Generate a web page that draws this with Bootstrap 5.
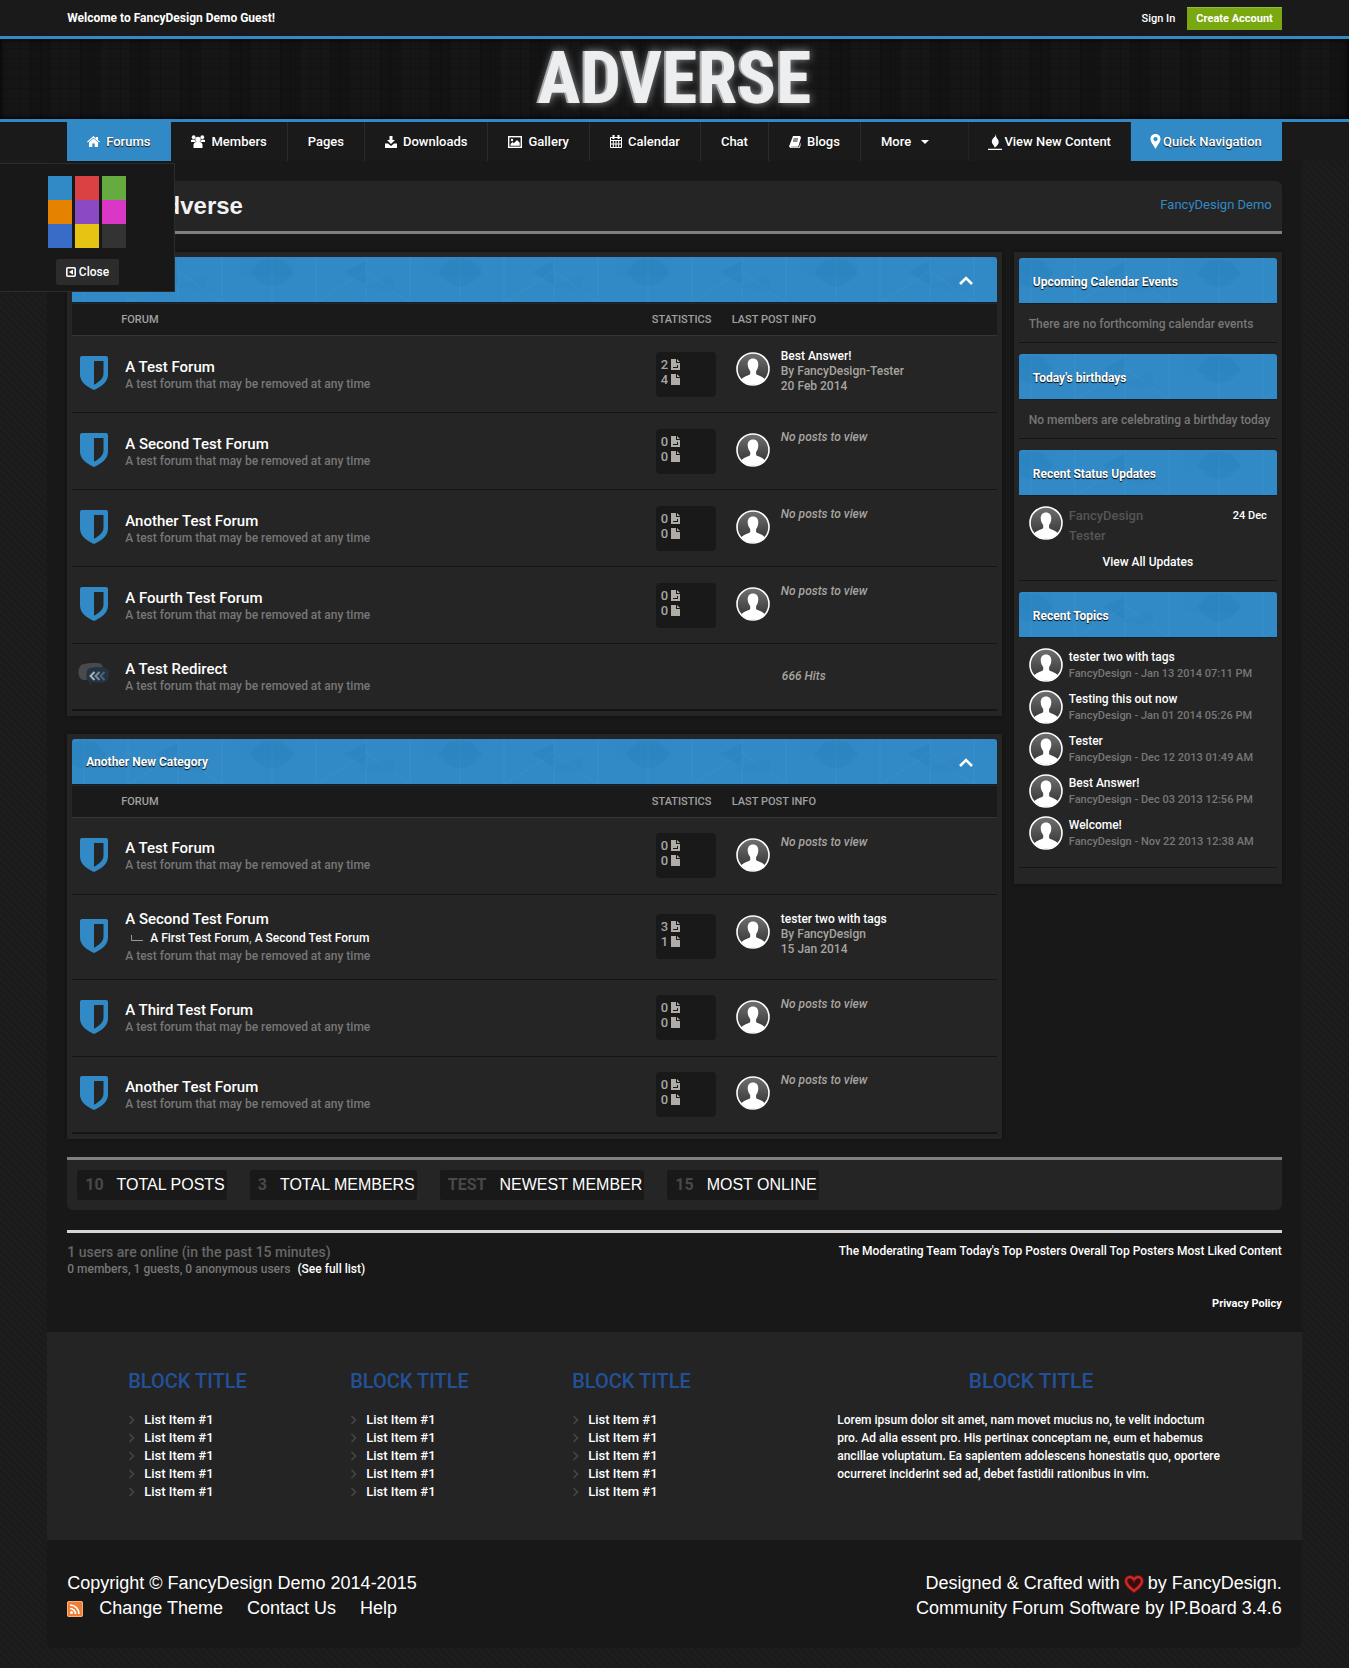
<!DOCTYPE html>
<html lang="en">
<head>
<meta charset="utf-8">
<meta name="viewport" content="width=device-width, initial-scale=1">
<title>FancyDesign Demo</title>
<link rel="stylesheet" href="https://cdn.jsdelivr.net/npm/bootstrap@5.3.0/dist/css/bootstrap.min.css">
<style>
body{background-color:#1b1b1b;background-image:repeating-linear-gradient(45deg,rgba(0,0,0,.05) 0 2px,rgba(255,255,255,.006) 2px 5px);color:#777;font:500 12px/17px Roboto,"Liberation Sans",sans-serif}
a{color:#fff;text-decoration:none}
a:hover{color:#318ac6}
svg{display:block;flex:none}
.shell{width:93%;margin:0 auto}
.gutter{padding-left:20px;padding-right:20px}
.arial{font-family:"Liberation Sans",Arial,sans-serif;font-weight:400}
.topbar{background:#1a1a1a;height:36px;color:#fff}
.welcome{font-size:12px;font-weight:700}
.signin{font-size:11px}
.create{background:#7aa810;border:0;border-top:1px solid #93bd33;border-radius:0;color:#fff;font:700 11px/20px Roboto,sans-serif;padding:1px 9px}
.banner{height:86px;border-top:3px solid #318ac6;border-bottom:3px solid #318ac6;background-color:#131313;background-image:repeating-linear-gradient(0deg,rgba(0,0,0,.14) 0 1px,transparent 1px 10px),repeating-linear-gradient(90deg,rgba(0,0,0,.14) 0 1px,transparent 1px 10px),repeating-linear-gradient(90deg,rgba(255,255,255,.01) 0 30px,transparent 30px 50px);box-shadow:inset 0 0 6px #000}
.brand{font:700 72px/80px "Liberation Sans Narrow","Roboto Condensed",Roboto,sans-serif;color:#eceeef;text-shadow:-2px 0 0 #a9adaf,0 0 9px rgba(255,255,255,.55)}
.menubar{background:#1a1a1a}
.menubar a{height:39px;padding:0 20px;border-right:1px solid #2b2b2b;color:#fff;font-size:13px;font-weight:500;gap:6px;text-shadow:0 1px 1px #111}
.menubar a.hot{background:#318ac6;border-color:#318ac6}
.menubar a.close-icon{gap:2px;padding:0 19px}
.menubar a.more{border-right:0}
.wrapper{background:#181818;border-radius:0 0 8px 8px;padding-top:20px}
.titlebar{background:#252525;border-bottom:3px solid #808080;border-radius:6px 6px 0 0;height:53px;padding:0 10px 0 81px}
.titlebar h1{font:700 24px/28px "Liberation Sans",Arial,sans-serif;color:#f2f2f2;margin:0}
.titlebar a{color:#318ac6;font-size:13px;font-weight:400;padding-bottom:4px}
.boards{gap:12px;margin-top:18px}
.side{width:268px;flex:none}
.panel{background:#252525;padding:5px;box-shadow:0 0 3px #111}
.panel+.panel{margin-top:18px}
.cap{height:46px;border-bottom:1px solid #10202c;border-radius:3px 3px 0 0;color:#fff;font:700 12px/17px Roboto,sans-serif;margin:0;padding:3px 23px 0 14px;text-shadow:0 1px 1px #000;background:#318ac6 url("data:image/svg+xml,%3Csvg xmlns='http://www.w3.org/2000/svg' width='188' height='46'%3E%3Cg fill='%23004c86' fill-opacity='.08'%3E%3Cpath d='M0 0h34v20H0zM166 0h22v20h-22z' opacity='.3'/%3E%3Cpath d='M12 1l12 3 10 11-10 11-12 4L0 26V4zM178 15l10-11v22zM106 4v24L84 15z'/%3E%3Cpath d='M100 30l34-12v16z' opacity='.4'/%3E%3C/g%3E%3Cpath d='M12 0v46M56 0v46M106 0v46M150 0v46M56 46l50-32 44 32' fill='none' stroke='%2370b8e8' stroke-opacity='.08'/%3E%3C/svg%3E")}
.cap button{background:none;border:0;padding:0}
.boardlist{width:100%;table-layout:fixed;border-collapse:collapse}
.boardlist th{height:32px;padding:0;background:#1a1a1a;border-top:1px solid #252525;border-bottom:1px solid #353535;color:#a0a0a0;font-size:11px;font-weight:500}
.boardlist td{height:77px;padding:0;vertical-align:middle;border-bottom:1px solid #141414;color:#777}
.boardlist tr.tall td{height:85px}
.boardlist tr.short td{height:66px}
.boardlist tr:last-child td{border-bottom:2px solid #141414}
.c-icon{width:49px}.c-stat{width:80px}.c-last{width:265px}
.boardlist .ico{padding:0 0 2px 8px}
.boardlist .short .ico{padding-left:6px}
.boardlist .name{padding:2px 0 0 4px}
.name h4{font-size:15px;line-height:17px;font-weight:500;margin:0}
.name p{margin:0;font-size:12px;line-height:16px}
.subs{height:20px;gap:7px;padding-left:6px;color:#aaa}
.tally{width:60px;height:45px;margin-left:4px;background:#191919;border-radius:4px;padding:5px 5px 0;color:#a8a4a0;font-size:13px;line-height:15px}
.tally div{gap:3px}
.last{gap:11px;padding:0 0 5px 4px;min-height:40px;color:#a8a4a0;font-size:12px;line-height:15px}
.last svg{margin-top:3px}
.hits{padding-left:50px;color:#a8a4a0}
.box-body{padding:12px 4px 9px 10px;border-bottom:1px solid #141414;margin-bottom:11px}
.box-body.people{padding:10px 10px 9px}
.side .panel{padding-top:6px}
.status{gap:6px;font-size:13px;line-height:20px;color:#555}
.status small{font-size:11px;color:#fff}
.topics{gap:8px}
.topics li{gap:6px;line-height:17px}
.topics li div{padding-top:1px}
.topics p{margin:0;font-size:11px;line-height:16px}
.totals{background:#252525;border-top:3px solid #808080;border-radius:0 0 6px 6px;height:53px;margin-top:18px;padding:10px;gap:23px}
.totals li{background:#191919;border-radius:3px;height:30px;padding:0 2px 1px 8px;gap:13px;color:#fff;font-size:16px;line-height:29px}
.totals b{color:#484848;font-family:Roboto,sans-serif}
.online{border-top:3px solid #d6d4d4;margin-top:20px;padding-top:10px;height:102px}
.online h3{font-size:14px;line-height:18px;font-weight:500;margin:0;color:#666}
.links{gap:3px;font-size:12px;line-height:16px;font-weight:500}
.blocks{background:#242424;height:208px;padding:35px 77px 0 81px}
.blocks h3{color:#235197;font-size:20px;line-height:28px;font-weight:500;margin:0 0 16px}
.blocks li{font-size:13px;line-height:18px;gap:9px}
.foot-col{width:222px;flex:none}
.lorem{padding-left:43px;color:#fff}
.lorem h3{font-size:21px}
.lorem p{font-size:12px;line-height:18px;margin:0}
.legal{color:#fff;font-size:18px;line-height:25px;padding-top:31px;height:108px}
.swatches{position:absolute;left:0;top:163px;width:175px;height:129px;background:#181818;border:1px solid #2c2c2c;border-left:0;z-index:5;padding-top:12px}
.palette{display:grid;grid-template-columns:repeat(3,24px);column-gap:3px;margin:0 0 11px 48px}
.palette button{height:24px;border:0;padding:0}
.shut{margin-left:56px;width:63px;height:26px;background:#2c2c2c;border:0;border-radius:2px;color:#fff;font-size:12px;font-weight:500;gap:3px}
</style>
<script src="https://cdn.jsdelivr.net/npm/bootstrap@5.3.0/dist/js/bootstrap.bundle.min.js"></script>
</head>
<body>
<svg width="0" height="0" class="position-absolute" aria-hidden="true">
<defs>
<linearGradient id="grey" x1="0" y1="0" x2="0" y2="1"><stop offset="0" stop-color="#707070"/><stop offset="1" stop-color="#303030"/></linearGradient>
<clipPath id="disc"><circle cx="17" cy="17" r="15.5"/></clipPath>
</defs>
<symbol id="avatar" viewBox="0 0 34 34"><circle cx="17" cy="17" r="16" fill="url(#grey)" stroke="#fff" stroke-width="1.6"/><path clip-path="url(#disc)" fill="#fff" d="M17 6.500c3.500 0 5.300 2.300 5.300 5.800 0 3-1 5.200-2.200 6.800v3c1.500 1.800 8.200 2.300 9.700 7.100L26 34H8l-3.500-5c1.500-4.800 8.200-5.300 9.700-7.100v-3C13 17.500 11.700 15.300 11.700 12.300c0-3.500 1.800-5.800 5.300-5.800z"/></symbol>
<symbol id="shield" viewBox="0 0 28 34"><path fill="#318ac6" fill-rule="evenodd" d="M2 0h24q2 0 2 2v16.500C28 26 21 31 14 34 7 31 0 26 0 18.500V2Q0 0 2 0zM14 5v23.700c5-2.700 9.500-6 9.500-11.200V5z"/></symbol>
<symbol id="redirect" viewBox="0 0 32 24"><path fill="#484a4c" d="M6 1q9-2 16-.5 3 1 3 6v5q0 5-4 5.500H8q-7 1-7.500-7Q0 2 6 1z"/><path fill="#243342" d="M12 5q9-2 16 0 3 1 3 6 0 7-4 8-7 2-14 0v4l-3-5q-2-1-1.500-7Q8.500 6 12 5z"/><path d="M16.500 9l-4 4 4 4" fill="none" stroke="#a8b2bc" stroke-width="2"/><path d="M21.500 9l-4 4 4 4" fill="none" stroke="#7d8b99" stroke-width="2"/><path d="M26.500 9l-4 4 4 4" fill="none" stroke="#4e6176" stroke-width="2"/></symbol>
<symbol id="reply" viewBox="0 0 10 11"><path fill="#b0aca8" fill-rule="evenodd" d="M0 0h5v4h4v7H0zM6 0l3 3H6zM2 8v1h5V6H6v2z"/></symbol>
<symbol id="file" viewBox="0 0 10 11"><path fill="#b0aca8" d="M0 0h5v4h4v7H0zM6 0l3 3H6z"/></symbol>
<symbol id="up" viewBox="0 0 16 10"><path d="M2 8l6-6 6 6" fill="none" stroke="#fff" stroke-width="2.600"/></symbol>
<symbol id="angle" viewBox="0 0 7 10"><path d="M1.500 1l4 4-4 4" fill="none" stroke="#464646" stroke-width="1.600"/></symbol>
</svg>

<header>
<div class="topbar"><div class="shell gutter h-100 d-flex justify-content-between align-items-center">
<span class="welcome">Welcome to FancyDesign Demo Guest!</span>
<div class="d-flex align-items-center gap-2"><a href="#" class="signin me-1">Sign In</a><button type="button" class="create">Create Account</button></div>
</div></div>
<div class="banner text-center"><a href="#" class="brand d-inline-block">ADVERSE</a></div>
<nav class="menubar"><div class="shell gutter d-flex">
<a href="#" class="hot d-flex align-items-center"><svg width="13" height="11" viewBox="0 0 13 11" fill="#fff"><path d="M6.500 0L9 2.200V1h2v3l2 1.700-.8.800L6.500 1.700.8 6.500 0 5.700z"/><path d="M2 6.300l4.500-3.800L11 6.300V11H7.700V7.500H5.300V11H2z"/></svg>Forums</a>
<a href="#" class="d-flex align-items-center"><svg width="14" height="13" viewBox="0 0 14 13" fill="#fff"><circle cx="7" cy="4.500" r="2.700"/><circle cx="2.700" cy="2.200" r="1.900"/><circle cx="11.300" cy="2.200" r="1.900"/><path d="M0 7V5q2-1 3.700-.3Q4 6 5 7zM14 7V5q-2-1-3.700-.3Q10 6 9 7zM2.500 13V9.500Q3 7 5 7h4q2 0 2.500 2.500V13z"/></svg>Members</a>
<a href="#" class="d-flex align-items-center">Pages</a>
<a href="#" class="d-flex align-items-center"><svg width="12" height="12" viewBox="0 0 12 12"><path fill="#fff" d="M4.500 0h3v4H10L6 8 2 4h2.500zM0 7.500h3L6 10l3-2.500h3V12H0z"/></svg>Downloads</a>
<a href="#" class="d-flex align-items-center"><svg width="14" height="12" viewBox="0 0 14 12"><rect x=".7" y=".7" width="12.600" height="10.600" fill="none" stroke="#fff" stroke-width="1.400"/><circle cx="4" cy="4" r="1.200" fill="#fff"/><path d="M2.500 9.800V8l2-2 1.300 1.300L9 4l2.700 2.800v3z" fill="#fff"/></svg>Gallery</a>
<a href="#" class="d-flex align-items-center"><svg width="12" height="13" viewBox="0 0 12 13"><path fill="none" stroke="#fff" d="M.5 2.500h11v10H.5zM.5 5.500h11M.5 9h11M3.300 5v7.500M6 5v7.500M8.700 5v7.500"/><path stroke="#fff" stroke-width="2" d="M3.500 0v4M8.500 0v4"/></svg>Calendar</a>
<a href="#" class="d-flex align-items-center">Chat</a>
<a href="#" class="d-flex align-items-center"><svg width="12" height="12" viewBox="0 0 12 12"><path fill="#fff" d="M4 0h7l1 1.500L9.500 10l-.5.700H2v.5h8l1.500-5V10L10.500 12H1.500L0 10.500z"/><path d="M4.500 3h4.500M4 5h4.500" stroke="#1a1a1a"/></svg>Blogs</a>
<a href="#" class="more d-flex align-items-center">More<svg width="8" height="4" viewBox="0 0 8 4" class="ms-1"><path fill="#fff" d="M0 0h8L4 4z"/></svg></a>
<span class="ms-auto d-flex"><a href="#" class="close-icon d-flex align-items-center border-start border-dark"><svg width="14" height="16" viewBox="0 0 14 16"><path fill="#fff" d="M8 0q-.5 2.500 1.500 5 2.500 3 0 6-1 1.500-3 2.500-.5-2-1.500-3-2.500-3 0-6Q8 2.500 8 0zM0 14.800h14V16H0z"/></svg>View New Content</a>
<a href="#" class="close-icon hot d-flex align-items-center"><svg width="11" height="15" viewBox="0 0 11 15"><path fill="#fff" fill-rule="evenodd" d="M5.500 0C9 0 10.500 2.500 10.500 5c0 3-3 6-5 10-2-4-5-7-5-10 0-2.500 1.500-5 5-5zm0 3a2 2 0 100 4.200 2 2 0 000-4.200z"/></svg>Quick Navigation</a></span>
</div></nav>
</header>

<aside class="swatches" aria-label="Theme colours">
<div class="palette">
<button style="background:#318ac6" aria-label="Blue"></button><button style="background:#d94142" aria-label="Red"></button><button style="background:#65ab40" aria-label="Green"></button>
<button style="background:#e58300" aria-label="Orange"></button><button style="background:#8b49c4" aria-label="Purple"></button><button style="background:#db37c6" aria-label="Pink"></button>
<button style="background:#396cc6" aria-label="Royal"></button><button style="background:#e5c511" aria-label="Yellow"></button><button style="background:#333" aria-label="Grey"></button>
</div>
<button type="button" class="shut d-flex align-items-center justify-content-center p-0"><svg width="10" height="10" viewBox="0 0 10 10"><rect x=".8" y=".8" width="8.400" height="8.400" rx="1" fill="none" stroke="#fff" stroke-width="1.600"/><path fill="#fff" d="M7 2.500v5L3 5z"/></svg>Close</button>
</aside>

<div class="shell wrapper">
<main class="gutter">
<div class="titlebar d-flex justify-content-between align-items-center"><h1>Adverse</h1><a href="#">FancyDesign Demo</a></div>

<div class="boards d-flex align-items-start">
<div class="flex-fill">
<section class="panel">
<h2 class="cap d-flex align-items-center justify-content-end"><button type="button" aria-label="Toggle category"><svg width="16" height="10"><use href="#up"/></svg></button></h2>
<table class="boardlist">
<thead><tr><th class="c-icon"></th><th>FORUM</th><th class="c-stat">STATISTICS</th><th class="c-last">LAST POST INFO</th></tr></thead>
<tbody>
<tr><td class="ico"><svg width="28" height="34"><use href="#shield"/></svg></td><td class="name"><h4><a href="#">A Test Forum</a></h4><p>A test forum that may be removed at any time</p></td><td><div class="tally"><div class="d-flex align-items-center">2<svg width="10" height="11"><use href="#reply"/></svg></div><div class="d-flex align-items-center">4<svg width="10" height="11"><use href="#file"/></svg></div></div></td><td><div class="last d-flex"><svg width="34" height="34"><use href="#avatar"/></svg><div><a href="#">Best Answer!</a><br>By FancyDesign-Tester<br>20 Feb 2014</div></div></td></tr>
<tr><td class="ico"><svg width="28" height="34"><use href="#shield"/></svg></td><td class="name"><h4><a href="#">A Second Test Forum</a></h4><p>A test forum that may be removed at any time</p></td><td><div class="tally"><div class="d-flex align-items-center">0<svg width="10" height="11"><use href="#reply"/></svg></div><div class="d-flex align-items-center">0<svg width="10" height="11"><use href="#file"/></svg></div></div></td><td><div class="last d-flex"><svg width="34" height="34"><use href="#avatar"/></svg><em>No posts to view</em></div></td></tr>
<tr><td class="ico"><svg width="28" height="34"><use href="#shield"/></svg></td><td class="name"><h4><a href="#">Another Test Forum</a></h4><p>A test forum that may be removed at any time</p></td><td><div class="tally"><div class="d-flex align-items-center">0<svg width="10" height="11"><use href="#reply"/></svg></div><div class="d-flex align-items-center">0<svg width="10" height="11"><use href="#file"/></svg></div></div></td><td><div class="last d-flex"><svg width="34" height="34"><use href="#avatar"/></svg><em>No posts to view</em></div></td></tr>
<tr><td class="ico"><svg width="28" height="34"><use href="#shield"/></svg></td><td class="name"><h4><a href="#">A Fourth Test Forum</a></h4><p>A test forum that may be removed at any time</p></td><td><div class="tally"><div class="d-flex align-items-center">0<svg width="10" height="11"><use href="#reply"/></svg></div><div class="d-flex align-items-center">0<svg width="10" height="11"><use href="#file"/></svg></div></div></td><td><div class="last d-flex"><svg width="34" height="34"><use href="#avatar"/></svg><em>No posts to view</em></div></td></tr>
<tr class="short"><td class="ico"><svg width="32" height="24"><use href="#redirect"/></svg></td><td class="name"><h4><a href="#">A Test Redirect</a></h4><p>A test forum that may be removed at any time</p></td><td></td><td><em class="hits d-block">666 Hits</em></td></tr>
</tbody></table>
</section>

<section class="panel">
<h2 class="cap d-flex align-items-center justify-content-between">Another New Category<button type="button" aria-label="Toggle category"><svg width="16" height="10"><use href="#up"/></svg></button></h2>
<table class="boardlist">
<thead><tr><th class="c-icon"></th><th>FORUM</th><th class="c-stat">STATISTICS</th><th class="c-last">LAST POST INFO</th></tr></thead>
<tbody>
<tr><td class="ico"><svg width="28" height="34"><use href="#shield"/></svg></td><td class="name"><h4><a href="#">A Test Forum</a></h4><p>A test forum that may be removed at any time</p></td><td><div class="tally"><div class="d-flex align-items-center">0<svg width="10" height="11"><use href="#reply"/></svg></div><div class="d-flex align-items-center">0<svg width="10" height="11"><use href="#file"/></svg></div></div></td><td><div class="last d-flex"><svg width="34" height="34"><use href="#avatar"/></svg><em>No posts to view</em></div></td></tr>
<tr class="tall"><td class="ico"><svg width="28" height="34"><use href="#shield"/></svg></td><td class="name"><h4><a href="#">A Second Test Forum</a></h4><div class="subs d-flex align-items-center"><svg width="12" height="6" viewBox="0 0 12 6"><path d="M.5 0v5.500H12" fill="none" stroke="#999"/></svg><span><a href="#">A First Test Forum</a>, <a href="#">A Second Test Forum</a></span></div><p>A test forum that may be removed at any time</p></td><td><div class="tally"><div class="d-flex align-items-center">3<svg width="10" height="11"><use href="#reply"/></svg></div><div class="d-flex align-items-center">1<svg width="10" height="11"><use href="#file"/></svg></div></div></td><td><div class="last d-flex"><svg width="34" height="34"><use href="#avatar"/></svg><div><a href="#">tester two with tags</a><br>By FancyDesign<br>15 Jan 2014</div></div></td></tr>
<tr><td class="ico"><svg width="28" height="34"><use href="#shield"/></svg></td><td class="name"><h4><a href="#">A Third Test Forum</a></h4><p>A test forum that may be removed at any time</p></td><td><div class="tally"><div class="d-flex align-items-center">0<svg width="10" height="11"><use href="#reply"/></svg></div><div class="d-flex align-items-center">0<svg width="10" height="11"><use href="#file"/></svg></div></div></td><td><div class="last d-flex"><svg width="34" height="34"><use href="#avatar"/></svg><em>No posts to view</em></div></td></tr>
<tr><td class="ico"><svg width="28" height="34"><use href="#shield"/></svg></td><td class="name"><h4><a href="#">Another Test Forum</a></h4><p>A test forum that may be removed at any time</p></td><td><div class="tally"><div class="d-flex align-items-center">0<svg width="10" height="11"><use href="#reply"/></svg></div><div class="d-flex align-items-center">0<svg width="10" height="11"><use href="#file"/></svg></div></div></td><td><div class="last d-flex"><svg width="34" height="34"><use href="#avatar"/></svg><em>No posts to view</em></div></td></tr>
</tbody></table>
</section>
</div>

<aside class="side"><div class="panel">
<h3 class="cap d-flex align-items-center">Upcoming Calendar Events</h3>
<div class="box-body">There are no forthcoming calendar events</div>
<h3 class="cap d-flex align-items-center">Today's birthdays</h3>
<div class="box-body">No members are celebrating a birthday today</div>
<h3 class="cap d-flex align-items-center">Recent Status Updates</h3>
<div class="box-body people"><div class="status d-flex"><svg width="34" height="34"><use href="#avatar"/></svg><div class="flex-fill"><div class="d-flex justify-content-between">FancyDesign<small>24 Dec</small></div>Tester</div></div><a href="#" class="d-block text-center mt-2">View All Updates</a></div>
<h3 class="cap d-flex align-items-center">Recent Topics</h3>
<div class="box-body people"><ul class="topics list-unstyled d-flex flex-column mb-2">
<li class="d-flex"><svg width="34" height="34"><use href="#avatar"/></svg><div><a href="#">tester two with tags</a><p>FancyDesign - Jan 13 2014 07:11 PM</p></div></li>
<li class="d-flex"><svg width="34" height="34"><use href="#avatar"/></svg><div><a href="#">Testing this out now</a><p>FancyDesign - Jan 01 2014 05:26 PM</p></div></li>
<li class="d-flex"><svg width="34" height="34"><use href="#avatar"/></svg><div><a href="#">Tester</a><p>FancyDesign - Dec 12 2013 01:49 AM</p></div></li>
<li class="d-flex"><svg width="34" height="34"><use href="#avatar"/></svg><div><a href="#">Best Answer!</a><p>FancyDesign - Dec 03 2013 12:56 PM</p></div></li>
<li class="d-flex"><svg width="34" height="34"><use href="#avatar"/></svg><div><a href="#">Welcome!</a><p>FancyDesign - Nov 22 2013 12:38 AM</p></div></li>
</ul></div>
</div></aside>
</div>

<ul class="totals arial list-unstyled d-flex mb-0">
<li class="d-flex"><b>10</b>TOTAL POSTS</li><li class="d-flex"><b>3</b>TOTAL MEMBERS</li><li class="d-flex"><b>TEST</b>NEWEST MEMBER</li><li class="d-flex"><b>15</b>MOST ONLINE</li>
</ul>

<div class="online d-flex justify-content-between">
<div><h3>1 users are online (in the past 15 minutes)</h3><span>0 members, 1 guests, 0 anonymous users</span> <a href="#" class="ms-1">(See full list)</a></div>
<div class="d-flex flex-column align-items-end"><div class="links d-flex"><a href="#">The Moderating Team</a><a href="#">Today's Top Posters</a><a href="#">Overall Top Posters</a><a href="#">Most Liked Content</a></div><a href="#" class="signin fw-bold mt-auto mb-3 pb-1">Privacy Policy</a></div>
</div>
</main>

<section class="blocks d-flex">
<div class="foot-col"><h3>BLOCK TITLE</h3><ul class="list-unstyled mb-0"><li class="d-flex align-items-center"><svg width="7" height="10"><use href="#angle"/></svg><a href="#">List Item #1</a></li><li class="d-flex align-items-center"><svg width="7" height="10"><use href="#angle"/></svg><a href="#">List Item #1</a></li><li class="d-flex align-items-center"><svg width="7" height="10"><use href="#angle"/></svg><a href="#">List Item #1</a></li><li class="d-flex align-items-center"><svg width="7" height="10"><use href="#angle"/></svg><a href="#">List Item #1</a></li><li class="d-flex align-items-center"><svg width="7" height="10"><use href="#angle"/></svg><a href="#">List Item #1</a></li></ul></div>
<div class="foot-col"><h3>BLOCK TITLE</h3><ul class="list-unstyled mb-0"><li class="d-flex align-items-center"><svg width="7" height="10"><use href="#angle"/></svg><a href="#">List Item #1</a></li><li class="d-flex align-items-center"><svg width="7" height="10"><use href="#angle"/></svg><a href="#">List Item #1</a></li><li class="d-flex align-items-center"><svg width="7" height="10"><use href="#angle"/></svg><a href="#">List Item #1</a></li><li class="d-flex align-items-center"><svg width="7" height="10"><use href="#angle"/></svg><a href="#">List Item #1</a></li><li class="d-flex align-items-center"><svg width="7" height="10"><use href="#angle"/></svg><a href="#">List Item #1</a></li></ul></div>
<div class="foot-col"><h3>BLOCK TITLE</h3><ul class="list-unstyled mb-0"><li class="d-flex align-items-center"><svg width="7" height="10"><use href="#angle"/></svg><a href="#">List Item #1</a></li><li class="d-flex align-items-center"><svg width="7" height="10"><use href="#angle"/></svg><a href="#">List Item #1</a></li><li class="d-flex align-items-center"><svg width="7" height="10"><use href="#angle"/></svg><a href="#">List Item #1</a></li><li class="d-flex align-items-center"><svg width="7" height="10"><use href="#angle"/></svg><a href="#">List Item #1</a></li><li class="d-flex align-items-center"><svg width="7" height="10"><use href="#angle"/></svg><a href="#">List Item #1</a></li></ul></div>
<div class="lorem flex-fill"><h3 class="text-center">BLOCK TITLE</h3><p>Lorem ipsum dolor sit amet, nam movet mucius no, te velit indoctum pro. Ad alia essent pro. His pertinax conceptam ne, eum et habemus ancillae voluptatum. Ea sapientem adolescens honestatis quo, oportere ocurreret inciderint sed ad, debet fastidii rationibus in vim.</p></div>
</section>

<footer class="legal arial gutter d-flex justify-content-between">
<div>Copyright © FancyDesign Demo 2014-2015
<div class="d-flex align-items-center gap-4"><span class="d-flex align-items-center gap-3"><svg width="16" height="16" viewBox="0 0 16 16"><rect width="16" height="16" rx="2" fill="#ee7f33"/><rect x=".5" y=".5" width="15" height="15" rx="1.500" fill="none" stroke="#f6b07c"/><circle cx="4.500" cy="11.500" r="1.500" fill="#fff"/><path d="M3 7.500a5.500 5.500 0 015.500 5.500M3 4a9 9 0 019 9" fill="none" stroke="#fff" stroke-width="1.700"/></svg><a href="#">Change Theme</a></span><a href="#">Contact Us</a><a href="#">Help</a></div></div>
<div class="text-end"><div class="d-flex align-items-center justify-content-end gap-1">Designed &amp; Crafted with <svg width="20" height="18" viewBox="0 0 20 18"><path d="M10 16C5 12 2 9.500 2 6c0-2.200 1.700-4 4-4 2 0 3.200 1.200 4 2.600C10.800 3.200 12 2 14 2c2.300 0 4 1.800 4 4 0 3.500-3 6-8 10z" fill="#330d0d" stroke="#6e1212" stroke-width="4"/><path d="M10 16C5 12 2 9.500 2 6c0-2.200 1.700-4 4-4 2 0 3.200 1.200 4 2.600C10.800 3.200 12 2 14 2c2.300 0 4 1.800 4 4 0 3.500-3 6-8 10z" fill="none" stroke="#d52b2b" stroke-width="1.800"/></svg><span>by <a href="#">FancyDesign</a>.</span></div><a href="#">Community Forum Software by IP.Board 3.4.6</a></div>
</footer>
</div>
</body>
</html>
